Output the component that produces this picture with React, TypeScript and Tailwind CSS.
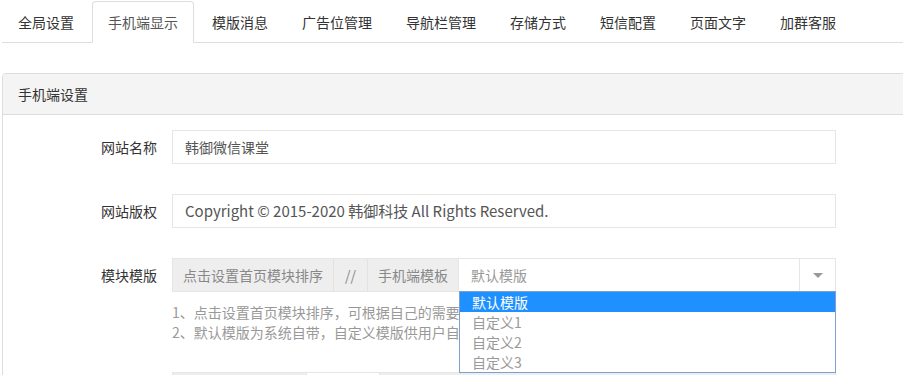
const TABS = ['全局设置', '手机端显示', '模版消息', '广告位管理', '导航栏管理', '存储方式', '短信配置', '页面文字', '加群客服']

const OPTIONS = ['默认模版', '自定义1', '自定义2', '自定义3']

function Field({ label, children }: { label: string; children: React.ReactNode }) {
  return (
    <div className="flex items-start mb-[30px]">
      <label className="w-[154px] shrink-0 text-right leading-[34px] text-[#333]">{label}</label>
      <div className="ml-[15px] w-[664px]">{children}</div>
    </div>
  )
}

export default function App() {
  return (
    <div className="h-[375px] overflow-hidden bg-white font-['Noto_Sans_CJK_SC',sans-serif] text-[14px] text-[#333]">
      <div className="w-[940px] pl-[2px] pt-[1px]">
        {/* Tabs */}
        <ul className="flex border-b border-[#ddd]">
          {TABS.map((tab, i) => (
            <li key={tab} className="mr-[2px] -mb-px">
              <a
                href="#"
                className={`block px-[15px] py-[10px] leading-5 border rounded-t-[4px] ${
                  i === 1
                    ? 'bg-white border-[#ddd] border-b-transparent text-[#555]'
                    : 'border-transparent text-[#333]'
                }`}
              >
                {tab}
              </a>
            </li>
          ))}
        </ul>

        {/* Panel */}
        <div className="mt-[30px] border border-[#ddd] rounded-[4px]">
          <div className="bg-[#f4f4f4] border-b border-[#ddd] px-[15px] py-[10px] leading-5 text-[#333] rounded-t-[4px]">
            手机端设置
          </div>
          <div className="pt-[15px]">
            <Field label="网站名称">
              <div className="h-[34px] border border-[#e6e6e6] px-[12px] leading-[32px] text-[#555]">韩御微信课堂</div>
            </Field>
            <Field label="网站版权">
              <div className="h-[34px] border border-[#e6e6e6] px-[12px] leading-[32px] text-[#555] text-[15px]">
                Copyright © 2015-2020 韩御科技 All Rights Reserved.
              </div>
            </Field>
            <Field label="模块模版">
              <div className="flex h-[34px] border border-[#e6e6e6] leading-[32px]">
                <div className="bg-[#eee] px-[10px] text-[#888]">点击设置首页模块排序</div>
                <div className="w-[34px] bg-[#eee] border-l border-[#e2e2e2] text-center text-[#888]">//</div>
                <div className="bg-[#eee] border-l border-[#e2e2e2] px-[10px] text-[#888]">手机端模板</div>
                <div className="relative flex flex-1 border-l border-[#e6e6e6] bg-white">
                  <span className="flex-1 pl-[12px] text-[#999]">默认模版</span>
                  <span className="flex w-[36px] items-center justify-center border-l border-[#e6e6e6]">
                    <span className="h-0 w-0 border-x-[5px] border-t-[5px] border-x-transparent border-t-[#999]" />
                  </span>
                  {/* open dropdown */}
                  <ul className="absolute left-0 -right-px top-[32px] z-10 border border-[#7f9dcf] bg-white">
                    {OPTIONS.map((opt, i) => (
                      <li
                        key={opt}
                        className={`h-5 pl-[12px] leading-5 ${i === 0 ? 'bg-[#1e90ff] text-white' : 'text-[#999]'}`}
                      >
                        {opt}
                      </li>
                    ))}
                  </ul>
                </div>
              </div>
              {/* help text, cut off where the open list covers it */}
              <p className="mt-[10px] w-[288px] overflow-hidden whitespace-nowrap leading-5 text-[#999]">
                1、点击设置首页模块排序，可根据自己的需要调整首页模块显示顺序
                <br />
                2、默认模版为系统自带，自定义模版供用户自行设计
              </p>
            </Field>
            <Field label="">
              <div className="flex h-[34px] border border-[#e6e6e6]">
                <div className="w-[133px] bg-[#eee]" />
                <div className="w-[73px] border-l border-[#e6e6e6] bg-white" />
                <div className="flex-1 border-l border-[#e6e6e6] bg-[#eee]" />
              </div>
            </Field>
          </div>
        </div>
      </div>
    </div>
  )
}
